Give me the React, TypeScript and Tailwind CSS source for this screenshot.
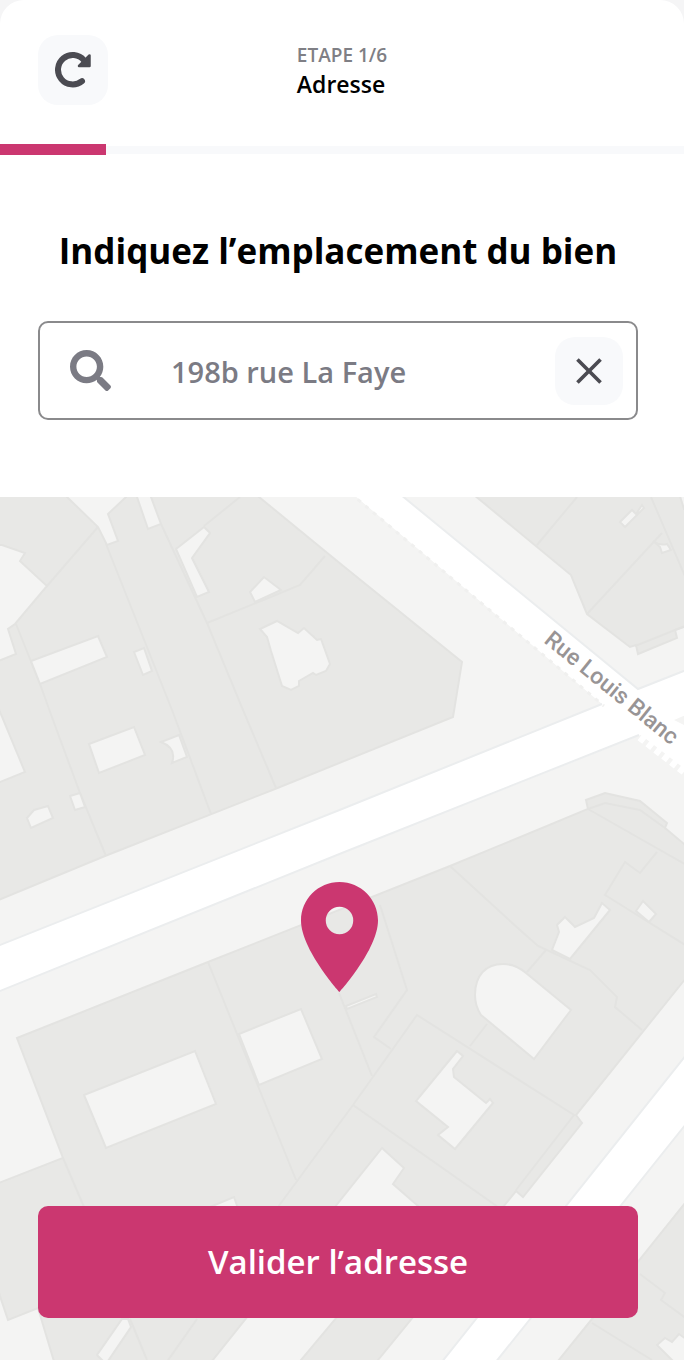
import React, { useState } from 'react';
import { FaSearch } from 'react-icons/fa';
import { MdClose, MdPlace } from 'react-icons/md';

// City blocks
const blocks = [
  'M-4 490H60L67 497L98 527L107 545L118 541L108 514L126 497V490H134L137 497L148 529L161 524L151 497V490H252L259 497L342 565L462 662L453 717L275 789L105 856L-4 901V782L0 782L25 772L0 712L-4 700V662L16 654L8 629L15 624L47 586L20 561L25 553L2 545L-4 545Z',
  'M468 490L571 575L587 614L630 647L636 645L638 654L677 638L675 630L690 625V509L684 509L678 490Z',
  'M17 1038L208 962L450 866L588 809L586 800L605 793L640 801L667 823L665 828L690 849V973L576 1115L582 1123L523 1197L516 1191L378 1360V1368H56L38 1308L8 1320L0 1296L-4 1280V1184L63 1158Z',
  'M690 1197L592 1319L554 1366H690Z',
];

// Courtyards inside the blocks
const courtyards = [
  'M31 661L98 636L107 657L40 684Z',
  'M134 652L144 648L152 671L143 675Z',
  'M204 527L210 533L192 558L209 592L197 597L176 549Z',
  'M250 592L264 577L281 590L255 602Z',
  'M260 629L277 621L298 633L304 628L317 640L321 639L330 664L326 671L316 675L313 673L299 681V686L291 690L282 686L271 651L267 637Z',
  'M89 744L134 727L145 755L99 773Z',
  'M161 742L179 735L187 757L172 763Q177 748 161 742Z',
  'M70 796L80 793L85 807L75 810Z',
  'M27 818L34 810L48 806L53 818L31 828Z',
  'M620 522L632 510L636 514L642 505L644 508L625 527Z',
  'M653 541Q660 546 667 544L671 550L662 553L660 547Z',
  'M239 1034L301 1009L322 1059L259 1085Z',
  'M84 1095L195 1051L216 1104L106 1148Z',
  'M346 1006L376 994L377 997L347 1009Z',
  'M475 995C475 975 486 964 503 964C512 964 519 967 526 973L571 1010L534 1059L481 1015Q475 1006 475 995Z',
  'M457 1051L463 1056L453 1069L454 1077L486 1103L490 1099L493 1103L455 1149L438 1135L448 1127L416 1101Z',
  'M565 917L575 927L594 918L602 903L610 910L570 959L552 950L559 932L557 925Z',
  'M643 901L656 914L649 922L636 911Z',
  'M382 1148L404 1168L393 1184L425 1212L296 1366H208Z',
  'M205 1209L234 1197L242 1220L210 1230Z',
  'M122 1319H128L131 1327L106 1364L97 1355Z',
  'M657 1345L665 1338L672 1342L679 1334L690 1342V1366H678Z',
];

// Plot boundaries
const plots = [
  'M98 527L47 586M106 544L172 710L211 814M161 524L207 623L243 710L276 788',
  'M16 624L40 684L53 720L80 793L106 856M207 623L300 585L325 556M240 497L204 526',
  'M577 497L537 545M587 614L662 533M651 497L690 588M635 646L690 624',
  'M208 962L258 1086L296 1180M353 1105L278 1207M353 1105L417 1015L574 1115L516 1190',
  'M339 993L372 1076M380 905L407 990L374 1037L391 1049M353 1105L498 1207',
  'M450 866L520 930L538 946L590 970L617 997L615 1007L642 1030M470 1046L487 1024M527 972L546 950',
  'M588 809L690 867M588 809L605 803L640 810L665 828M657 852L640 873L625 862L605 895L690 948',
  'M63 1158L84 1207M130 1319L147 1360M197 1319L164 1366',
  'M640 1274L665 1293L661 1300L690 1321M592 1323L652 1360',
];

const CityMap: React.FC = () => {
  return (
    <svg
      viewBox="0 497 684 863"
      preserveAspectRatio="xMidYMid slice"
      className="absolute inset-0 h-full w-full"
      aria-hidden="true"
    >
      <rect x="-10" y="487" width="704" height="883" fill="#f4f4f3" />
      <g fill="#e8e8e6" stroke="#e3e3e1" strokeWidth="2">
        {blocks.map((d) => (
          <path key={d} d={d} />
        ))}
      </g>
      <g fill="none" stroke="#e3e3e1" strokeWidth="2">
        {plots.map((d) => (
          <path key={d} d={d} />
        ))}
      </g>
      <g fill="#f4f4f3" stroke="#e3e3e1" strokeWidth="2">
        {courtyards.map((d) => (
          <path key={d} d={d} />
        ))}
      </g>

      {/* Streets */}
      <path
        d="M-10 949L342 809L602 704L348 490H395L638 689L694 667V776L641 735L342 853L-10 995Z"
        fill="#ffffff"
      />
      <path d="M694 1045L437 1368H491L694 1114Z" fill="#ffffff" />
      <g fill="none" stroke="#ebedee" strokeWidth="2">
        <path d="M-10 949L342 809L602 704" />
        <path d="M-10 995L342 853L639 735" />
        <path d="M395 490L638 689L694 667" />
        <path d="M694 1045L437 1368M694 1114L491 1368" />
      </g>
      <path d="M674 720L690 713V728Z" fill="#f4f4f3" />
      <path
        d="M350 493L604 706"
        fill="none"
        stroke="#f0f0ef"
        strokeWidth="3"
        strokeDasharray="4 6"
      />
      <path
        d="M640 737L690 776"
        fill="none"
        stroke="#ffffff"
        strokeWidth="8"
        strokeDasharray="6 4"
      />
      <text
        transform="translate(543 642) rotate(39)"
        fill="#989495"
        stroke="#ffffff"
        strokeWidth="3"
        paintOrder="stroke"
        className="font-['Roboto',sans-serif] text-[23px] font-medium"
      >
        Rue Louis Blanc
      </text>
    </svg>
  );
};

const RestartIcon: React.FC = () => {
  return (
    <svg width="36" height="36" viewBox="0 0 36 36" fill="none" stroke="currentColor" aria-hidden="true">
      <path d="M27 29.1A14.7 14.7 0 1 1 29 8.3" strokeWidth="6" strokeLinecap="round" />
      <path d="M34.5 3.5V14H24Z" fill="currentColor" strokeWidth="2.5" strokeLinejoin="round" />
    </svg>
  );
};

const App: React.FC = () => {
  const [address, setAddress] = useState('198b rue La Faye');

  return (
    <div className="bg-[#f5f5f6] font-['Open_Sans','Noto_Sans',sans-serif]">
      <main className="flex min-h-screen flex-col overflow-hidden rounded-t-3xl bg-white">
        {/* Header */}
        <header className="grid h-36 grid-cols-[1fr_auto_1fr] items-start pt-[35px] pr-[38px] pl-[38px]">
          <button
            type="button"
            aria-label="Recommencer"
            className="flex h-[70px] w-[70px] items-center justify-center rounded-[20px] bg-[#f8f9fb] text-[#4b4b52]"
          >
            <RestartIcon />
          </button>
          <div className="pt-1">
            <p className="text-[19px] leading-8 font-semibold text-[#7f7f85]">ETAPE 1/6</p>
            <p className="text-[23px] leading-[26px] font-semibold text-black">Adresse</p>
          </div>
        </header>

        {/* Progress */}
        <div
          role="progressbar"
          aria-label="Etape"
          aria-valuemin={0}
          aria-valuemax={6}
          aria-valuenow={1}
          className="flex h-[11px] items-center"
        >
          <div className="h-full w-[106px] bg-[#cb3770]" />
          <div className="h-2 flex-1 bg-[#f8f9fb]" />
        </div>

        {/* Address */}
        <section className="pt-[71px] pr-[46px] pb-[77px] pl-[38px]">
          <h1 className="text-center text-[35px] leading-[50px] font-bold text-black">
            Indiquez l’emplacement du bien
          </h1>
          <div className="mt-[45px] flex h-[99px] items-center rounded-[10px] border-2 border-[#8a8a8c] pr-[13px] pl-[30px]">
            <label htmlFor="address" aria-label="Adresse du bien" className="text-[#7b7b84]">
              <FaSearch size={41} />
            </label>
            <input
              id="address"
              type="text"
              value={address}
              onChange={(e) => setAddress(e.target.value)}
              className="ml-[60px] min-w-0 flex-1 pt-0.5 text-[29px] leading-10 font-semibold text-[#7b7b84] outline-none"
            />
            <button
              type="button"
              aria-label="Effacer"
              onClick={() => setAddress('')}
              className="flex h-[68px] w-[68px] items-center justify-center rounded-[20px] bg-[#f8f9fb] text-[#4b4b52]"
            >
              <MdClose size={44} />
            </button>
          </div>
        </section>

        {/* Map */}
        <section className="relative flex min-h-[600px] flex-1 flex-col justify-end pr-[46px] pb-[42px] pl-[38px]">
          <CityMap />
          <MdPlace
            viewBox="5 2 14 20"
            className="absolute top-[51%] left-1/2 h-[110px] w-[77px] -translate-x-[41px] -translate-y-[55px] text-[#cb3770]"
          />
          <button
            type="button"
            className="relative h-28 rounded-[10px] bg-[#cb3770] text-[33px] font-semibold text-white"
          >
            Valider l’adresse
          </button>
        </section>
      </main>
    </div>
  );
};

export default App;
